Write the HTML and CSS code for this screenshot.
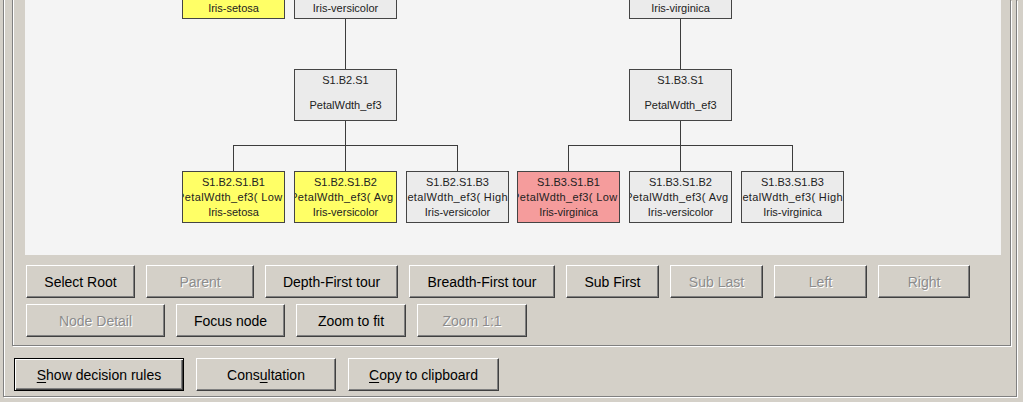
FILE: index.html
```html
<!DOCTYPE html>
<html>
<head>
<meta charset="utf-8">
<link rel="stylesheet" href="styles.css">
</head>
<body>
<div class="outer">
  <div class="inner">
    <div class="canvas">
      <svg class="links" width="976" height="255" viewBox="0 0 976 255" shape-rendering="crispEdges">
        <g stroke="#3c3c3c" stroke-width="1" fill="none">
          <path d="M320.5 18V69M655.5 18V69"/>
          <path d="M320.5 120V145M208.5 145H432.5M208.5 145V171M320.5 145V171M432.5 145V171"/>
          <path d="M655.5 120V145M543.5 145H767.5M543.5 145V171M655.5 145V171M767.5 145V171"/>
        </g>
      </svg>
      <div class="node leaf yellow" style="left:157px;top:-33px"><span>S1.B1</span><span class="cond">PetalLngth_ef3( Low )</span><span>Iris-setosa</span></div>
      <div class="node leaf" style="left:269px;top:-33px"><span>S1.B2</span><span class="cond">PetalLngth_ef3( Avg )</span><span>Iris-versicolor</span></div>
      <div class="node leaf" style="left:604px;top:-33px"><span>S1.B3</span><span class="cond">PetalLngth_ef3( High )</span><span>Iris-virginica</span></div>

      <div class="node split" style="left:269px;top:69px"><span>S1.B2.S1</span><span>PetalWdth_ef3</span></div>
      <div class="node split" style="left:604px;top:69px"><span>S1.B3.S1</span><span>PetalWdth_ef3</span></div>

      <div class="node leaf yellow" style="left:157px;top:171px"><span>S1.B2.S1.B1</span><span class="cond">PetalWdth_ef3( Low )</span><span>Iris-setosa</span></div>
      <div class="node leaf yellow" style="left:269px;top:171px"><span>S1.B2.S1.B2</span><span class="cond">PetalWdth_ef3( Avg )</span><span>Iris-versicolor</span></div>
      <div class="node leaf" style="left:381px;top:171px"><span>S1.B2.S1.B3</span><span class="cond">PetalWdth_ef3( High )</span><span>Iris-versicolor</span></div>
      <div class="node leaf pink" style="left:492px;top:171px"><span>S1.B3.S1.B1</span><span class="cond">PetalWdth_ef3( Low )</span><span>Iris-virginica</span></div>
      <div class="node leaf" style="left:604px;top:171px"><span>S1.B3.S1.B2</span><span class="cond">PetalWdth_ef3( Avg )</span><span>Iris-versicolor</span></div>
      <div class="node leaf" style="left:716px;top:171px"><span>S1.B3.S1.B3</span><span class="cond">PetalWdth_ef3( High )</span><span>Iris-virginica</span></div>
    </div>
    <div class="navrow">
      <button class="btn w-sr">Select Root</button>
      <button class="btn w-par" disabled>Parent</button>
      <button class="btn w-dft">Depth-First tour</button>
      <button class="btn w-bft">Breadth-First tour</button>
      <button class="btn w-sub">Sub First</button>
      <button class="btn w-sub" disabled>Sub Last</button>
      <button class="btn w-sub" disabled>Left</button>
      <button class="btn w-right" disabled>Right</button>
    </div>
    <div class="navrow">
      <button class="btn w-nd" disabled>Node Detail</button>
      <button class="btn w-fn">Focus node</button>
      <button class="btn w-zf">Zoom to fit</button>
      <button class="btn w-zf" disabled>Zoom 1:1</button>
    </div>
  </div>
  <div class="bottomrow">
    <button class="btn focused w-sdr"><u>S</u>how decision rules</button>
    <button class="btn w-cons">Cons<u>u</u>ltation</button>
    <button class="btn w-copy"><u>C</u>opy to clipboard</button>
  </div>
</div>
</body>
</html>
```

FILE: styles.css
```css
html, body {
  margin: 0;
  padding: 0;
  width: 1023px;
  height: 402px;
  overflow: hidden;
  background: #d4d0c8;
  font-family: "Liberation Sans", Arial, sans-serif;
}

.outer {
  box-sizing: border-box;
  margin-left: 3px;
  width: 1014px;
  height: 397px;
  border: 1px solid #808080;
  border-top: 0;
  box-shadow: inset 1px 0 0 #fff, 1px 1px 0 #fff;
  padding-left: 8px;
}

.inner {
  box-sizing: border-box;
  width: 999px;
  height: 346px;
  border: 1px solid #808080;
  border-top: 0;
  box-shadow: inset 1px 0 0 #fff, 1px 1px 0 #fff;
  padding-left: 12px;
}

.canvas {
  position: relative;
  width: 976px;
  height: 255px;
  background: #f4f4f4;
  overflow: hidden;
}

.links {
  position: absolute;
  left: 0;
  top: 0;
}

.node {
  position: absolute;
  box-sizing: border-box;
  width: 103px;
  height: 52px;
  border: 1px solid #444;
  background: #ebebeb;
  color: #222;
  font-size: 11px;
  line-height: 15px;
  display: flex;
  flex-direction: column;
  align-items: center;
  overflow: hidden;
  padding-top: 3px;
}

.node span {
  white-space: nowrap;
  display: block;
  text-align: center;
}

.node span.cond {
  letter-spacing: 0.35px;
}

.node.split {
  gap: 10px;
}

.node.yellow { background: #ffff66; }
.node.pink { background: #f59c9c; }

.navrow {
  display: flex;
  gap: 11px;
  margin-left: 1px;
  margin-top: 10px;
}

.navrow + .navrow {
  margin-top: 6px;
}

.bottomrow {
  display: flex;
  gap: 12px;
  margin-left: 2px;
  margin-top: 12px;
}

.btn {
  box-sizing: border-box;
  height: 33px;
  margin: 0;
  padding: 0;
  background: #d4d0c8;
  border: 1px solid;
  border-color: #fff #404040 #404040 #fff;
  box-shadow: inset -1px -1px 0 #808080;
  font-family: "Liberation Sans", Arial, sans-serif;
  font-size: 14px;
  color: #000;
  text-align: center;
  white-space: nowrap;
}

.btn:disabled {
  color: #8c8c8c;
  text-shadow: 1px 1px 0 #fff;
}

.btn.focused {
  border-color: #000;
  box-shadow: inset 1px 1px 0 #fff, inset -1px -1px 0 #404040, inset -2px -2px 0 #808080;
}

.btn u {
  text-decoration: underline;
  text-underline-offset: 2px;
}

.w-sr { width: 109px; }
.w-par { width: 108px; }
.w-dft { width: 133px; }
.w-bft { width: 146px; }
.w-sub { width: 93px; }
.w-right { width: 92px; }
.w-nd { width: 139px; }
.w-fn { width: 109px; }
.w-zf { width: 110px; }
.w-sdr { width: 170px; }
.w-cons { width: 140px; }
.w-copy { width: 151px; }
```
